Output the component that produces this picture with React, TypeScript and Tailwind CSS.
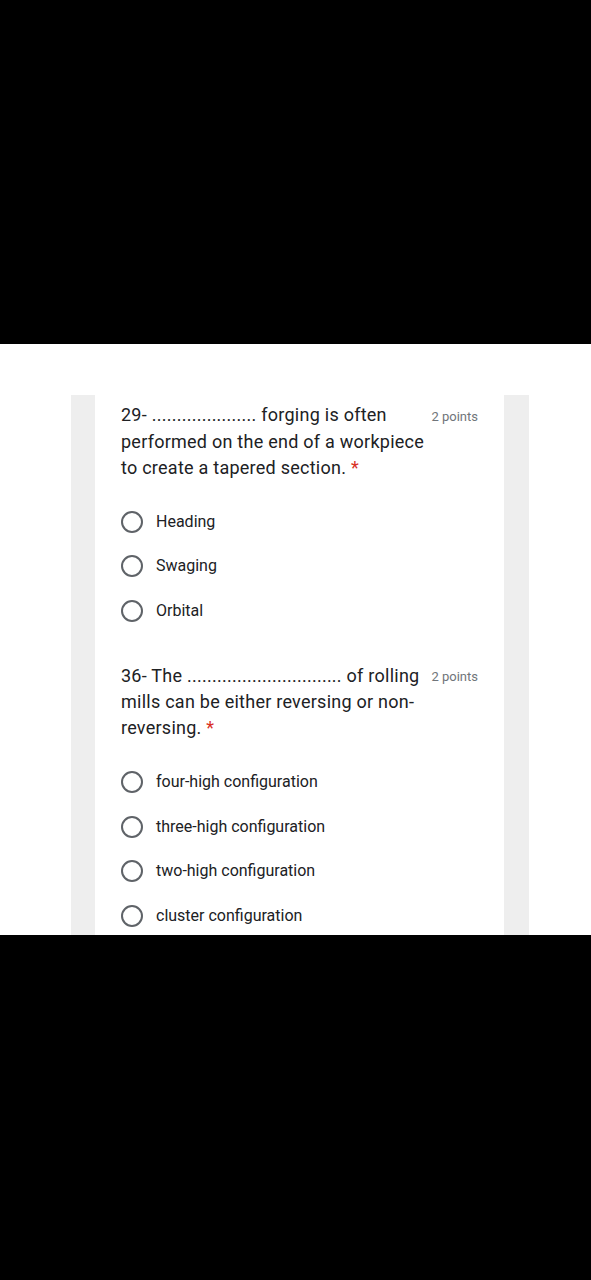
import React from "react";

function Radio({ label }: { label: string }) {
  return (
    <div className="flex items-center h-[44.5px]">
      <div className="w-[22px] h-[22px] rounded-full border-2 border-[#5f6368] shrink-0" />
      <span className="ml-[13px] text-[16px] text-[#202124]" style={{ fontFamily: "Roboto, 'Liberation Sans', sans-serif" }}>
        {label}
      </span>
    </div>
  );
}

export default function App() {
  const qFont = { fontFamily: "Roboto, 'Liberation Sans', sans-serif" };
  return (
    <div className="w-[591px] h-[1280px] bg-black flex flex-col">
      <div className="h-[344px] bg-black shrink-0" />
      <div className="h-[591px] bg-white shrink-0 pt-[51px] flex flex-col">
        <div className="ml-[71px] w-[458px] flex flex-1">
          <div className="w-[24px] bg-[#eeeeee]" />
          <div className="w-[409px] bg-white pl-[26px] pr-[26px] pt-[7px]">
            <div className="flex justify-between">
              <div className="text-[18px] leading-[26.5px] tracking-[0.25px] text-[#202124]" style={qFont}>
                29- ..................... forging is often
                <br />
                performed on the end of a workpiece
                <br />
                to create a tapered section. <span className="text-[#d93025]">*</span>
              </div>
              <div className="text-[13px] text-[#70757a] leading-[26.5px] mt-[2px] whitespace-nowrap" style={qFont}>
                2 points
              </div>
            </div>
            <div className="mt-[18px]">
              <Radio label="Heading" />
              <Radio label="Swaging" />
              <Radio label="Orbital" />
            </div>
            <div className="flex justify-between mt-[30px]">
              <div className="text-[18px] leading-[26px] tracking-[0.25px] text-[#202124]" style={qFont}>
                36- The ............................... of rolling
                <br />
                mills can be either reversing or non-
                <br />
                reversing. <span className="text-[#d93025]">*</span>
              </div>
              <div className="text-[13px] text-[#70757a] leading-[26px] mt-[1px] whitespace-nowrap" style={qFont}>
                2 points
              </div>
            </div>
            <div className="mt-[19px]">
              <Radio label="four-high configuration" />
              <Radio label="three-high configuration" />
              <Radio label="two-high configuration" />
              <Radio label="cluster configuration" />
            </div>
          </div>
          <div className="w-[25px] bg-[#eeeeee]" />
        </div>
      </div>
      <div className="flex-1 bg-black" />
    </div>
  );
}
